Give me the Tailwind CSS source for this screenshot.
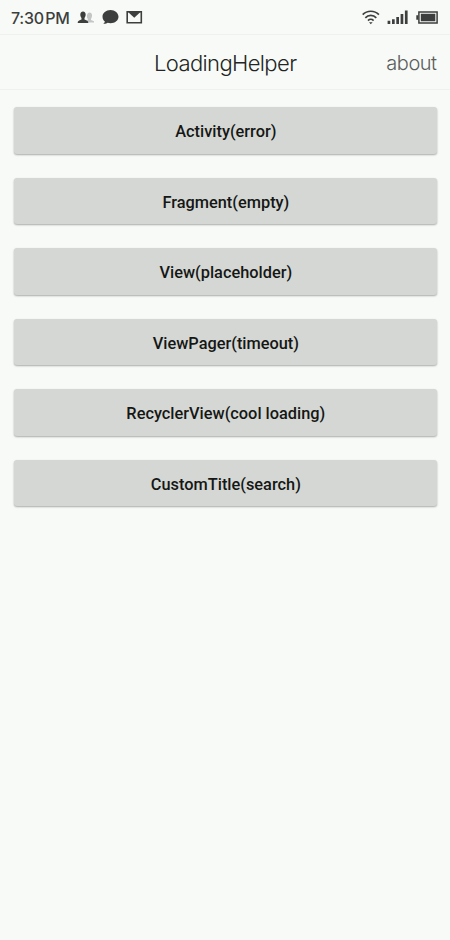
<!DOCTYPE html>
<html lang="en">
<head>
<meta charset="utf-8">
<meta name="viewport" content="width=device-width">
<title>LoadingHelper</title>
<script src="https://cdn.jsdelivr.net/npm/@tailwindcss/browser@4"></script>
</head>
<body class="h-[940px] w-[450px] overflow-hidden bg-[#f8faf8] font-['Roboto',sans-serif]">
<div class="flex h-[35px] items-center justify-between border-b border-[#eff1ef] pr-[12px] pl-[11px] text-[#3c3f3d]">
  <div class="flex items-center">
    <span class="w-[66px] whitespace-nowrap pt-px font-['Inter',sans-serif] text-[16px] font-medium leading-[20px] tracking-[-0.250px] [word-spacing:-2.5px]">7:30 PM</span>
    <svg class="h-[16px] w-[18px]" viewBox="0 0 18 16" fill="currentColor">
      <path class="text-[#c3c6c4]" d="M9 13.500v-1l2-2c-2-3-1-7 1.500-7S16 6.500 14 10v1l3 1.200v1.300z"/>
      <path d="M0.700 14c0-2 .8-2.400 3.800-3.500V9C2.700 6.800 2.800 2.500 6 2.500S9.300 6.800 7.500 9v1.500c3 1.100 3.800 1.500 3.800 3.500z"/>
    </svg>
    <svg class="ml-[6px] h-[16px] w-[18px]" viewBox="0 0 18 16" fill="currentColor">
      <path d="M9.500 1C5 1 1.500 4 1.500 7.700c0 2 1 3.700 2.400 4.900-.2.900-.7 1.500-1.700 2.100 2 .2 3.300-.2 4.400-.9.900.3 1.900.4 2.900.4 4.500 0 8-2.900 8-6.500S14 1 9.500 1z"/>
    </svg>
    <svg class="ml-[6px] h-[16px] w-[18px]" viewBox="0 0 18 16">
      <path d="M2.200 2.800h14.100v10.900H2.200z" fill="none" stroke="currentColor" stroke-width="1.600"/>
      <path d="M2.500 2.500h13.500L9.250 8.800z" fill="currentColor"/>
    </svg>
  </div>
  <div class="flex items-center">
    <svg class="h-[16px] w-[18px]" viewBox="0 0 18 16" fill="none" stroke="currentColor" stroke-width="1.700">
      <path d="M.7 5.700c4.400-4.600 11.800-4.600 16.200 0M3.300 8.800c3-3.200 8-3.200 11 0M6 11.600c1.600-1.600 4-1.600 5.600 0"/>
      <path d="M7 13.200h3.600L8.800 15.200z" fill="currentColor" stroke="none"/>
    </svg>
    <svg class="ml-[7px] h-[16px] w-[22px]" viewBox="0 0 22 16" fill="currentColor">
      <path d="M.6 11.800h2.700v3.200H.6zM5 10.300h2.700V15H5zM9.300 8H12v7H9.300zM13.600 5h2.700v10h-2.700zM17.900 1.500h2.700V15h-2.700z"/>
    </svg>
    <svg class="ml-[7px] h-[16px] w-[22px]" viewBox="0 0 22 16">
      <path d="M2.900 3h18.200v11H2.900z" fill="none" stroke="currentColor" stroke-width="1.500"/>
      <path d="M4.800 4.800h14.500v7.400H4.800zM.3 6.200h2v4.500h-2z" fill="currentColor"/>
    </svg>
  </div>
</div>
<header class="grid h-[55px] grid-cols-[1fr_auto_1fr] items-center border-b border-[#eff1ef] pt-px pr-[13.500px] pl-[14px] font-['Inter',sans-serif]">
  <span></span>
  <h1 class="text-[22px] font-light leading-[28px] tracking-[-0.620px] text-[#222523]">LoadingHelper</h1>
  <a class="justify-self-end text-[20px] font-light leading-[28px] tracking-[-0.500px] text-[#5b5e5c]">about</a>
</header>
<main class="flex flex-col gap-[24.100px] pt-[17px] pr-[12.600px] pl-[14.300px] text-[16.350px] font-medium text-[#151715]">
  <button class="h-[46.500px] rounded-[3px] bg-[#d5d7d5] pt-[4px] shadow-[0_1px_2px_rgba(0,0,0,0.32)]">Activity(error)</button>
  <button class="h-[46.500px] rounded-[3px] bg-[#d5d7d5] pt-[4px] shadow-[0_1px_2px_rgba(0,0,0,0.32)]">Fragment(empty)</button>
  <button class="h-[46.500px] rounded-[3px] bg-[#d5d7d5] pt-[4px] shadow-[0_1px_2px_rgba(0,0,0,0.32)]">View(placeholder)</button>
  <button class="h-[46.500px] rounded-[3px] bg-[#d5d7d5] pt-[4px] shadow-[0_1px_2px_rgba(0,0,0,0.32)]">ViewPager(timeout)</button>
  <button class="h-[46.500px] rounded-[3px] bg-[#d5d7d5] pt-[4px] shadow-[0_1px_2px_rgba(0,0,0,0.32)]">RecyclerView(cool loading)</button>
  <button class="h-[46.500px] rounded-[3px] bg-[#d5d7d5] pt-[4px] shadow-[0_1px_2px_rgba(0,0,0,0.32)]">CustomTitle(search)</button>
</main>
</body>
</html>
